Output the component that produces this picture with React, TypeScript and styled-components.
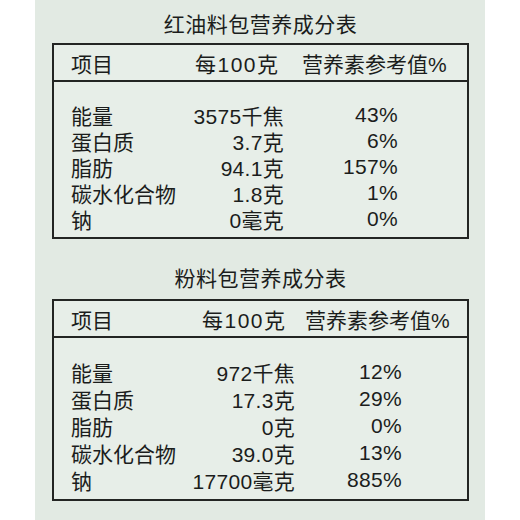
import styled, { createGlobalStyle } from "styled-components";

interface Row {
  name: string;
  value: string;
  pct: string;
}

interface Table {
  title: string;
  rows: Row[];
  valueEnd: number;
  pctEnd: number;
  headValueStart: number;
  headPctStart: number;
  pitch: number;
}

const tables: Table[] = [
  {
    title: "红油料包营养成分表",
    valueEnd: 284,
    pctEnd: 398,
    headValueStart: 195,
    headPctStart: 302,
    pitch: 26,
    rows: [
      { name: "能量", value: "3575千焦", pct: "43%" },
      { name: "蛋白质", value: "3.7克", pct: "6%" },
      { name: "脂肪", value: "94.1克", pct: "157%" },
      { name: "碳水化合物", value: "1.8克", pct: "1%" },
      { name: "钠", value: "0毫克", pct: "0%" },
    ],
  },
  {
    title: "粉料包营养成分表",
    valueEnd: 295,
    pctEnd: 402,
    headValueStart: 202,
    headPctStart: 305,
    pitch: 27,
    rows: [
      { name: "能量", value: "972千焦", pct: "12%" },
      { name: "蛋白质", value: "17.3克", pct: "29%" },
      { name: "脂肪", value: "0克", pct: "0%" },
      { name: "碳水化合物", value: "39.0克", pct: "13%" },
      { name: "钠", value: "17700毫克", pct: "885%" },
    ],
  },
];

// x of the text start inside the box, and width of the name column
const LEFT = 71;
const NAME_W = 100;

const GlobalStyle = createGlobalStyle`
  html, body {
    margin: 0;
    padding: 0;
    background: #ffffff;
  }
  body {
    font-family: "Liberation Sans", "Noto Sans CJK SC", sans-serif;
    color: #1b1d1c;
  }
`;

const Panel = styled.div`
  margin-left: 35px;
  width: 450px;
  height: 520px;
  background: #e2eae3;
  padding: 11px 16px 0 17px;
  box-sizing: border-box;
  display: flex;
  flex-direction: column;
`;

const Title = styled.div<{ $top: number }>`
  margin-top: ${({ $top }) => $top}px;
  font-size: 21px;
  line-height: 28px;
  text-align: center;
  letter-spacing: 0.5px;
`;

const Box = styled.div<{ $gap: number }>`
  margin-top: ${({ $gap }) => $gap}px;
  border: 2px solid #232523;
  background: #e7eee8;
`;

const Head = styled.div<{ $value: number; $pct: number }>`
  display: grid;
  grid-template-columns: ${({ $value }) => $value - LEFT}px ${({ $value, $pct }) => $pct - $value}px auto;
  height: 35px;
  align-items: center;
  padding-left: ${LEFT - 54}px;
  border-bottom: 2px solid #232523;
  font-size: 21px;
  white-space: nowrap;
`;

const HeadValue = styled.span`
  letter-spacing: 1.5px;
`;

const Body = styled.div<{ $top: number }>`
  padding: ${({ $top }) => $top}px 0 7px ${LEFT - 54}px;
`;

const Line = styled.div<{ $value: number; $pct: number; $pitch: number }>`
  display: grid;
  grid-template-columns: ${NAME_W}px ${({ $value }) => $value - LEFT - NAME_W}px ${({ $value, $pct }) => $pct - $value}px;
  height: ${({ $pitch }) => $pitch}px;
  align-items: center;
  font-size: 21px;
`;

const Name = styled.span`
  white-space: nowrap;
`;

const Num = styled.span`
  text-align: right;
  white-space: nowrap;
  letter-spacing: 0.3px;
`;

const NutritionTable = ({ t, first }: { t: Table; first: boolean }) => (
  <>
    <Title $top={first ? 0 : 26}>{t.title}</Title>
    <Box $gap={first ? 4 : 6}>
      <Head $value={t.headValueStart} $pct={t.headPctStart}>
        <span>项目</span>
        <HeadValue>每100克</HeadValue>
        <span>营养素参考值%</span>
      </Head>
      <Body $top={first ? 18 : 19}>
        {t.rows.map((r) => (
          <Line key={r.name} $value={t.valueEnd} $pct={t.pctEnd} $pitch={t.pitch}>
            <Name>{r.name}</Name>
            <Num>{r.value}</Num>
            <Num>{r.pct}</Num>
          </Line>
        ))}
      </Body>
    </Box>
  </>
);

export default function App() {
  return (
    <>
      <GlobalStyle />
      <Panel>
        {tables.map((t, i) => (
          <NutritionTable key={t.title} t={t} first={i === 0} />
        ))}
      </Panel>
    </>
  );
}
